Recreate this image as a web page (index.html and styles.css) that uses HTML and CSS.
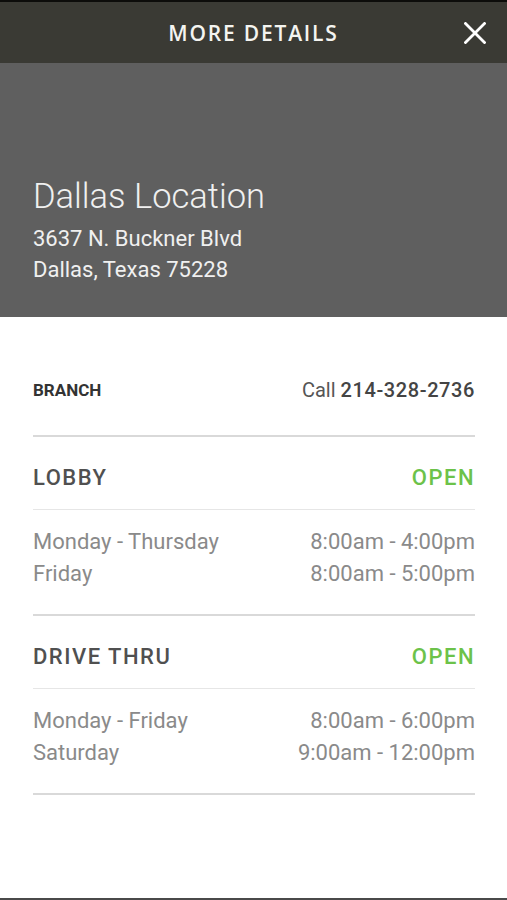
FILE: index.html
```html
<!DOCTYPE html>
<html lang="en">
<head>
<meta charset="utf-8">
<title>More Details</title>
<link rel="stylesheet" href="styles.css">
</head>
<body>
<div class="app">
  <header class="topbar">
    <span></span>
    <h1 class="topbar-title">MORE DETAILS</h1>
    <button class="close" aria-label="Close">
      <svg width="22" height="22" viewBox="0 0 22 22"><path d="M1.5 1.5 L20.5 20.5 M20.5 1.5 L1.5 20.5" stroke="#fff" stroke-width="2.8" stroke-linecap="square" fill="none"/></svg>
    </button>
  </header>
  <section class="hero">
    <h2 class="hero-title">Dallas Location</h2>
    <p class="hero-line">3637 N. Buckner Blvd</p>
    <p class="hero-line">Dallas, Texas 75228</p>
  </section>
  <main class="content">
    <div class="branch-row">
      <span class="branch-label">BRANCH</span>
      <span class="branch-call">Call <strong>214-328-2736</strong></span>
    </div>
    <div class="divider-thick"></div>
    <div class="sec-head">
      <span class="sec-name">LOBBY</span>
      <span class="sec-status">OPEN</span>
    </div>
    <div class="divider-thin"></div>
    <div class="hours">
      <div class="hours-row"><span>Monday - Thursday</span><span>8:00am - 4:00pm</span></div>
      <div class="hours-row"><span>Friday</span><span>8:00am - 5:00pm</span></div>
    </div>
    <div class="divider-thick"></div>
    <div class="sec-head">
      <span class="sec-name">DRIVE THRU</span>
      <span class="sec-status">OPEN</span>
    </div>
    <div class="divider-thin"></div>
    <div class="hours">
      <div class="hours-row"><span>Monday - Friday</span><span>8:00am - 6:00pm</span></div>
      <div class="hours-row"><span>Saturday</span><span>9:00am - 12:00pm</span></div>
    </div>
    <div class="divider-thick"></div>
  </main>
</div>
</body>
</html>
```

FILE: styles.css
```css
* { box-sizing: border-box; }
html, body { margin: 0; padding: 0; background: #fff; }
body { font-family: Roboto, "Liberation Sans", sans-serif; }

.app {
  min-height: 100vh;
  display: flex;
  flex-direction: column;
  border-bottom: 2px solid #4a4a4a;
}

.topbar {
  height: 63px;
  border-top: 2px solid #0c0c0a;
  background: #3a3a34;
  display: grid;
  grid-template-columns: 1fr auto 1fr;
  align-items: center;
}
.topbar-title {
  margin: 0;
  font-family: "Open Sans", "Liberation Sans", sans-serif;
  font-weight: 600;
  font-size: 21px;
  letter-spacing: 1.8px;
  color: #f4f4f0;
  line-height: 30px;
}
.close {
  justify-self: end;
  margin-right: 21px;
  padding: 0;
  border: 0;
  background: none;
  width: 22px;
  height: 22px;
  display: flex;
}

.hero {
  height: 254px;
  background: #5f5f5f;
  padding: 113px 33px 0;
  color: #f0f0f0;
}
.hero-title {
  margin: 0 0 7px;
  font-weight: 300;
  font-size: 34.5px;
  line-height: 40px;
}
.hero-line {
  margin: 0;
  font-size: 22px;
  line-height: 31px;
}

.content {
  padding: 0 32px 0 33px;
}
.branch-row {
  height: 48px;
  margin-top: 49px;
  margin-bottom: 21px;
  display: flex;
  justify-content: space-between;
  align-items: center;
}
.branch-label {
  font-weight: 700;
  font-size: 17px;
  color: #333;
}
.branch-call {
  font-size: 20px;
  color: #555;
}
.branch-call strong {
  font-weight: 500;
  color: #444;
  letter-spacing: 0.6px;
}

.divider-thick { height: 2px; background: #d9d9d9; }
.divider-thin { height: 1px; background: #e6e6e6; }

.sec-head {
  display: flex;
  justify-content: space-between;
  align-items: center;
  padding: 23px 0 13px;
  line-height: 36px;
  font-size: 22px;
  font-weight: 500;
  letter-spacing: 1.5px;
}
.sec-name { color: #505050; }
.sec-status { color: #6cc24a; }

.hours {
  padding: 16px 0 24px;
  color: #8a8a8a;
  font-size: 22px;
}
.hours-row {
  display: flex;
  justify-content: space-between;
  line-height: 32px;
}
```
